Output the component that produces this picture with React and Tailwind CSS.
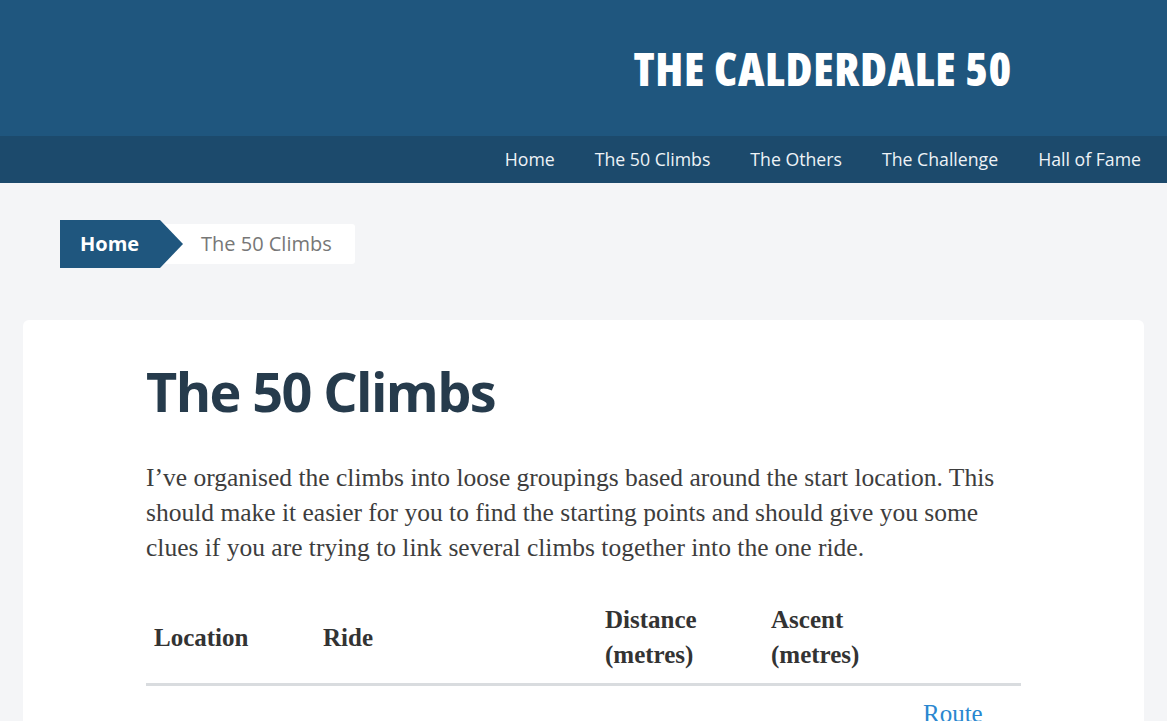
import React from 'react';

const navItems = ['Home', 'The 50 Climbs', 'The Others', 'The Challenge', 'Hall of Fame'];

const rows = [
    { location: 'Hebden Bridge', ride: 'Heptonstall (The Buttress)', distance: '1,200', ascent: '150' },
];

function Header() {
    return (
        <header className="font-['Open_Sans',sans-serif]">
            <div className="bg-[#1f567e] h-[136px] flex items-center justify-end pr-[155px]">
                <h1 className="text-white text-[46px] font-extrabold [font-stretch:75%] tracking-[0.7px] leading-none pb-[1px]">
                    THE CALDERDALE 50
                </h1>
            </div>
            <nav className="bg-[#1c4a6c] h-[47px] flex items-center justify-end pr-[6px]">
                <ul className="flex">
                    {navItems.map((item) => (
                        <li key={item}>
                            <a href="#" className="block px-[20px] text-[17.7px] text-[#eef3f7]">{item}</a>
                        </li>
                    ))}
                </ul>
            </nav>
        </header>
    );
}

function Breadcrumb() {
    return (
        <div className="flex items-center pl-[60px] pt-[37px] font-['Open_Sans',sans-serif]">
            <div className="relative z-10 bg-[#1f567e] h-12 w-[100px] flex items-center pl-5">
                <a href="#" className="text-white font-bold text-[20px]">Home</a>
                <div className="absolute left-full top-0 h-12 w-[23px] bg-[#1f567e] [clip-path:polygon(0_0,100%_50%,0_100%)]"></div>
            </div>
            <div className="bg-white h-10 pl-[41px] pr-[23px] flex items-center rounded-r-[3px] text-[20px] text-[#777]">
                The 50 Climbs
            </div>
        </div>
    );
}

function ClimbsTable() {
    return (
        <table className="w-full mt-[19px] border-collapse text-left font-['Liberation_Serif',serif] text-[25px] leading-[35px] text-[#333]">
            <thead>
                <tr className="border-b-[3px] border-[#d9dcdf]">
                    <th className="w-[169px] px-2 pt-[18px] pb-[11px] align-middle font-bold">Location</th>
                    <th className="w-[282px] px-2 pt-[18px] pb-[11px] align-middle font-bold">Ride</th>
                    <th className="w-[166px] px-2 pt-[18px] pb-[11px] align-middle font-bold">Distance<br />(metres)</th>
                    <th className="w-[152px] px-2 pt-[18px] pb-[11px] align-middle font-bold">Ascent<br />(metres)</th>
                    <th className="px-2 pt-[18px] pb-[11px]"></th>
                </tr>
            </thead>
            <tbody>
                {rows.map((row) => (
                    <tr key={row.ride}>
                        <td className="px-2 pt-[18px] align-middle">{row.location}</td>
                        <td className="px-2 pt-[18px] align-middle">{row.ride}</td>
                        <td className="px-2 pt-[18px] align-middle">{row.distance}</td>
                        <td className="px-2 pt-[18px] align-middle">{row.ascent}</td>
                        <td className="px-2 pt-[10px] align-top">
                            <a href="#" className="text-[#2a87d0]">Route<br />Map</a>
                        </td>
                    </tr>
                ))}
            </tbody>
        </table>
    );
}

export default function App() {
    return (
        <div className="min-h-screen bg-[#f4f5f7]">
            <Header />
            <Breadcrumb />
            <main className="mx-[23px] mt-[52px] bg-white rounded-md pt-[44px] pb-10">
                <div className="max-w-[875px] mx-auto">
                    <h2 className="font-['Open_Sans',sans-serif] font-bold text-[54px] tracking-[-1.6px] leading-none text-[#263b4c]">The 50 Climbs</h2>
                    <p className="mt-[42px] font-['Liberation_Serif',serif] text-[25.5px] leading-[35px] text-[#3d3d3d]">
                        I’ve organised the climbs into loose groupings based around the start location. This should make it easier for you to find the starting points and should give you some clues if you are trying to link several climbs together into the one ride.
                    </p>
                    <ClimbsTable />
                </div>
            </main>
        </div>
    );
}
